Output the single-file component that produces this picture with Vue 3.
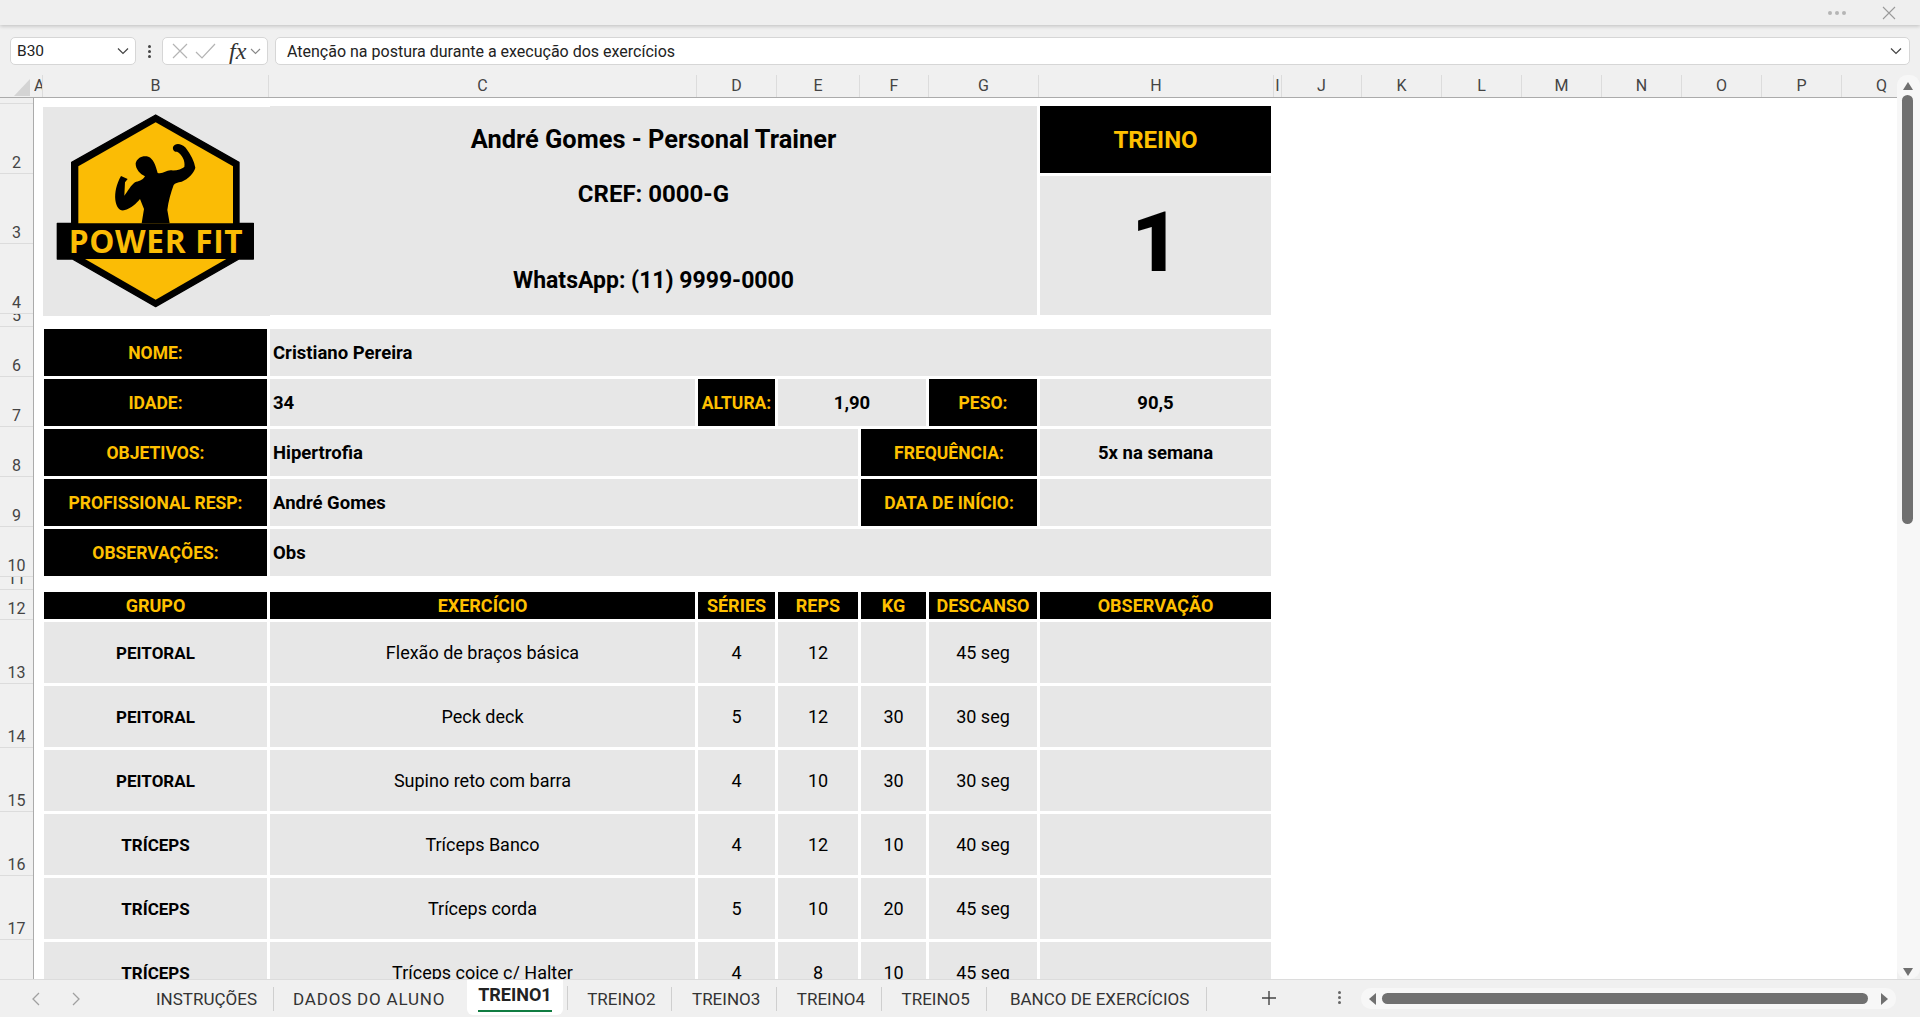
<template>
  <div class="app">
    <!-- barra de título -->
    <div class="title-bar">
      <span class="more-dots"><i></i><i></i><i></i></span>
      <svg class="close-x" width="14" height="14" viewBox="0 0 14 14"><path d="M1 1l12 12M13 1L1 13" stroke="#9a9a9a" stroke-width="1.1" fill="none" /></svg>
    </div>

    <!-- barra de fórmulas -->
    <div class="formula-bar">
      <div class="name-box">
        <span>B30</span>
        <svg width="12" height="8" viewBox="0 0 12 8"><path d="M1 1.500l5 5 5-5" stroke="#444" stroke-width="1.2" fill="none" /></svg>
      </div>
      <div class="kebab"><i></i><i></i><i></i></div>
      <div class="fx-box">
        <svg width="16" height="16" viewBox="0 0 16 16"><path d="M1 1l14 14M15 1L1 15" stroke="#b4b4b4" stroke-width="1.2" fill="none" /></svg>
        <svg width="21" height="16" viewBox="0 0 21 16"><path d="M1 9l6 6L20 1" stroke="#b4b4b4" stroke-width="1.2" fill="none" /></svg>
        <span class="fx">fx</span>
        <svg width="11" height="7" viewBox="0 0 11 7"><path d="M1 1l4.500 4.500L10 1" stroke="#888" stroke-width="1.1" fill="none" /></svg>
      </div>
      <div class="formula-input">
        <span>Atenção na postura durante a execução dos exercícios</span>
        <svg width="12" height="8" viewBox="0 0 12 8"><path d="M1 1.500l5 5 5-5" stroke="#444" stroke-width="1.2" fill="none" /></svg>
      </div>
    </div>

    <!-- cabeçalho de colunas -->
    <div class="col-headers">
      <div class="corner"><svg width="16" height="17" viewBox="0 0 16 17"><path d="M16 0v17H0z" fill="#d4d4d4" /></svg></div>
      <div
        class="col-head"
        v-for="col in columns"
        :key="col.name"
        :style="{ width: col.width + 'px' }"
      >{{ col.name }}</div>
    </div>

    <div class="sheet-area">
      <!-- números das linhas -->
      <div class="row-gutter">
        <div
          class="row-head"
          v-for="(row, i) in gutterRows"
          :key="i"
          :style="{ height: row.height + 'px' }"
        >{{ row.label }}</div>
      </div>

      <div class="sheet">
        <div class="grid head-grid">
          <div class="logo-cell">
            <svg width="230" height="210" viewBox="0 0 690 630">
              <path d="M350 30L600 172V355H643V462H600L350 605L100 462H55V355H98V172Z" fill="#000" stroke="#000" stroke-width="4" stroke-linejoin="round" />
              <path d="M350 52L582 184V355H118V184Z" fill="#fbbc05" />
              <path d="M138 462H562L350 584Z" fill="#fbbc05" />
              <path d="M402 126C408 114 425 114 440 128C455 148 466 168 469 188C465 204 448 222 428 230C416 232 408 234 404 240C396 262 388 290 385 315L392 355H308L315 312L303 282C292 295 278 310 255 316C240 318 232 305 229 285C227 262 232 238 246 213L266 222L258 232L256 272C266 260 276 240 288 232C298 228 310 228 318 214C304 208 289 192 290 175C294 158 312 150 328 155C342 160 350 180 356 204C372 208 380 196 395 196C412 198 428 192 436 186C440 168 428 146 414 140C408 142 400 136 402 126Z" fill="#000" />
              <text x="351" y="445" text-anchor="middle" class="logo-text">POWER FIT</text>
            </svg>
          </div>
          <div class="title-cell">
            <div class="title-line first">André Gomes - Personal Trainer</div>
            <div class="title-line second">CREF: 0000-G</div>
            <div class="title-line third">WhatsApp: (11) 9999-0000</div>
          </div>
          <div class="treino-label">TREINO</div>
          <div class="treino-num">1</div>
        </div>

        <div class="grid info-grid">
          <div class="label">NOME:</div>
          <div class="value span-all">Cristiano Pereira</div>

          <div class="label">IDADE:</div>
          <div class="value">34</div>
          <div class="label">ALTURA:</div>
          <div class="value center span-2">1,90</div>
          <div class="label">PESO:</div>
          <div class="value center">90,5</div>

          <div class="label">OBJETIVOS:</div>
          <div class="value span-3">Hipertrofia</div>
          <div class="label span-2">FREQUÊNCIA:</div>
          <div class="value center">5x na semana</div>

          <div class="label">PROFISSIONAL RESP:</div>
          <div class="value span-3">André Gomes</div>
          <div class="label span-2">DATA DE INÍCIO:</div>
          <div class="value center"></div>

          <div class="label">OBSERVAÇÕES:</div>
          <div class="value span-all">Obs</div>
        </div>

        <div class="grid train-head">
          <div class="label small" v-for="h in trainHeaders" :key="h">{{ h }}</div>
        </div>
        <div class="grid train-body">
          <template v-for="(t, i) in exercises" :key="i">
            <div class="data strong">{{ t.grupo }}</div>
            <div class="data">{{ t.nome }}</div>
            <div class="data">{{ t.series }}</div>
            <div class="data">{{ t.reps }}</div>
            <div class="data">{{ t.kg }}</div>
            <div class="data">{{ t.descanso }}</div>
            <div class="data"></div>
          </template>
        </div>
      </div>

      <!-- barra de rolagem vertical -->
      <div class="v-scroll">
        <svg width="12" height="8" viewBox="0 0 12 8"><path d="M6 0l5 8H1z" fill="#707070" /></svg>
        <div class="v-thumb"></div>
        <svg class="v-down" width="12" height="8" viewBox="0 0 12 8"><path d="M1 0h10L6 8z" fill="#707070" /></svg>
      </div>
    </div>

    <!-- abas -->
    <div class="tab-bar">
      <svg class="nav first-nav" width="10" height="16" viewBox="0 0 10 16"><path d="M8 2L2 8l6 6" stroke="#a0a0a0" stroke-width="1.3" fill="none" /></svg>
      <svg class="nav" width="10" height="16" viewBox="0 0 10 16"><path d="M2 2l6 6-6 6" stroke="#a0a0a0" stroke-width="1.3" fill="none" /></svg>
      <div class="tabs">
        <div
          class="tab"
          v-for="tab in tabs"
          :key="tab"
          :class="{
            active: tab === 'TREINO1',
            wide: tab === 'DADOS DO ALUNO',
            last: tab === 'BANCO DE EXERCÍCIOS',
          }"
        >{{ tab }}</div>
      </div>
      <svg class="plus" width="14" height="14" viewBox="0 0 14 14"><path d="M7 0v14M0 7h14" stroke="#444" stroke-width="1.4" /></svg>
      <div class="kebab tab-kebab"><i></i><i></i><i></i></div>
      <div class="h-scroll">
        <svg width="7" height="12" viewBox="0 0 7 12"><path d="M7 0v12L0 6z" fill="#707070" /></svg>
        <div class="h-thumb"></div>
        <svg width="7" height="12" viewBox="0 0 7 12"><path d="M0 0v12l7-6z" fill="#707070" /></svg>
      </div>
    </div>
  </div>
</template>

<script setup>
const columns = [
  { name: 'A', width: 9 },
  { name: 'B', width: 226 },
  { name: 'C', width: 428 },
  { name: 'D', width: 80 },
  { name: 'E', width: 83 },
  { name: 'F', width: 69 },
  { name: 'G', width: 110 },
  { name: 'H', width: 235 },
  { name: 'I', width: 8 },
  { name: 'J', width: 80 },
  { name: 'K', width: 80 },
  { name: 'L', width: 80 },
  { name: 'M', width: 80 },
  { name: 'N', width: 80 },
  { name: 'O', width: 80 },
  { name: 'P', width: 80 },
  { name: 'Q', width: 80 },
]

const gutterRows = [
  { label: '', height: 6 },
  { label: '2', height: 70 },
  { label: '3', height: 70 },
  { label: '4', height: 70 },
  { label: '5', height: 13 },
  { label: '6', height: 50 },
  { label: '7', height: 50 },
  { label: '8', height: 50 },
  { label: '9', height: 50 },
  { label: '10', height: 50 },
  { label: '11', height: 13 },
  { label: '12', height: 30 },
  { label: '13', height: 64 },
  { label: '14', height: 64 },
  { label: '15', height: 64 },
  { label: '16', height: 64 },
  { label: '17', height: 64 },
  { label: '', height: 64 },
]

const trainHeaders = ['GRUPO', 'EXERCÍCIO', 'SÉRIES', 'REPS', 'KG', 'DESCANSO', 'OBSERVAÇÃO']

const exercises = [
  { grupo: 'PEITORAL', nome: 'Flexão de braços básica', series: 4, reps: 12, kg: '', descanso: '45 seg' },
  { grupo: 'PEITORAL', nome: 'Peck deck', series: 5, reps: 12, kg: 30, descanso: '30 seg' },
  { grupo: 'PEITORAL', nome: 'Supino reto com barra', series: 4, reps: 10, kg: 30, descanso: '30 seg' },
  { grupo: 'TRÍCEPS', nome: 'Tríceps Banco', series: 4, reps: 12, kg: 10, descanso: '40 seg' },
  { grupo: 'TRÍCEPS', nome: 'Tríceps corda', series: 5, reps: 10, kg: 20, descanso: '45 seg' },
  { grupo: 'TRÍCEPS', nome: 'Tríceps coice c/ Halter', series: 4, reps: 8, kg: 10, descanso: '45 seg' },
]

const tabs = ['INSTRUÇÕES', 'DADOS DO ALUNO', 'TREINO1', 'TREINO2', 'TREINO3', 'TREINO4', 'TREINO5', 'BANCO DE EXERCÍCIOS']
</script>

<style>
html, body {
  margin: 0;
  overflow: hidden;
}
</style>

<style scoped>
.app {
  width: 1920px;
  height: 1017px;
  display: flex;
  flex-direction: column;
  background: #f0f0f0;
  font-family: "Roboto", "Liberation Sans", sans-serif;
  color: #000;
  overflow: hidden;
}

.title-bar {
  height: 25px;
  flex-shrink: 0;
  display: flex;
  align-items: center;
  justify-content: flex-end;
  padding-right: 24px;
  gap: 36px;
  box-shadow: 0 1px 4px rgba(0,0,0,0.22);
  background: #efefef;
  box-sizing: border-box;
}

.more-dots {
  display: flex;
  gap: 3px;
}

.more-dots i {
  width: 4px;
  height: 4px;
  border-radius: 50%;
  background: #b5b5b5;
}

.formula-bar {
  display: flex;
  align-items: stretch;
  height: 28px;
  margin: 12px 10px 10px 10px;
  flex-shrink: 0;
}

.name-box, .fx-box, .formula-input {
  background: #fff;
  border: 1px solid #d6d6d6;
  border-radius: 5px;
  box-sizing: border-box;
  display: flex;
  align-items: center;
}

.name-box {
  width: 126px;
  padding: 0 6px;
  justify-content: space-between;
  font-size: 15.5px;
  color: #222;
}

.kebab {
  width: 26px;
  display: flex;
  flex-direction: column;
  align-items: center;
  justify-content: center;
  gap: 2px;
}

.kebab i {
  width: 3px;
  height: 3px;
  background: #444;
  border-radius: 50%;
}

.fx-box {
  width: 106px;
  padding: 0 4px 0 9px;
  gap: 7px;
}

.fx {
  font-family: "Liberation Serif", serif;
  font-style: italic;
  font-size: 24px;
  color: #333;
  margin-left: 6px;
  margin-right: -3px;
  line-height: 1;
}

.formula-input {
  flex: 1;
  margin-left: 7px;
  padding: 0 7px 0 11px;
  justify-content: space-between;
  font-size: 16px;
  color: #222;
}

.col-headers {
  display: flex;
  height: 23px;
  flex-shrink: 0;
  border-bottom: 1px solid #ababab;
  width: 1897px;
  overflow: hidden;
  box-sizing: border-box;
}

.corner {
  width: 34px;
  flex-shrink: 0;
  display: flex;
  justify-content: flex-end;
  padding: 4px 4px 0 0;
  box-sizing: border-box;
}

.col-head {
  flex-shrink: 0;
  text-align: center;
  font-size: 16px;
  line-height: 22px;
  color: #444;
  border-right: 1px solid #dcdcdc;
  box-sizing: border-box;
  overflow: hidden;
}

.sheet-area {
  flex: 1;
  display: flex;
  min-height: 0;
}

.row-gutter {
  width: 34px;
  flex-shrink: 0;
  border-right: 1px solid #ababab;
  box-sizing: border-box;
  overflow: hidden;
}

.row-head {
  display: flex;
  align-items: flex-end;
  justify-content: center;
  box-sizing: border-box;
  border-bottom: 1px solid #dcdcdc;
  font-size: 16px;
  line-height: 21px;
  color: #444;
  overflow: hidden;
}

.sheet {
  width: 1863px;
  background: #fff;
  padding: 8px 0 0 10px;
  box-sizing: border-box;
  overflow: hidden;
}

.grid {
  display: grid;
  grid-template-columns: 223px 425px 77px 80px 65px 108px 231px;
  gap: 3px;
}

.head-grid {
  grid-template-rows: 67px 139px;
}

.logo-cell {
  grid-row: 1 / span 2;
  margin: 1px -3px -1px -1px;
  background: #e7e7e7;
  display: flex;
  align-items: center;
  justify-content: center;
  overflow: hidden;
}

.logo-cell svg {
  flex-shrink: 0;
  margin: 0 5px 3px 0;
}

.logo-text {
  font-family: "Open Sans", sans-serif;
  font-weight: 700;
  font-size: 95px;
  letter-spacing: 2px;
  fill: #fbbc05;
}

.title-cell {
  grid-column: 2 / span 5;
  grid-row: 1 / span 2;
  background: #e7e7e7;
  display: flex;
  flex-direction: column;
  align-items: center;
  font-weight: 700;
  font-size: 24px;
}

.title-line {
  line-height: 30px;
}

.title-line.first {
  margin-top: 18px;
  font-size: 25.400px;
}

.title-line.second {
  margin-top: 25px;
}

.title-line.third {
  margin-top: 57px;
  font-size: 23px;
}

.treino-label {
  background: #000;
  color: #ffc000;
  font-weight: 700;
  font-size: 24px;
  padding-top: 1px;
  display: flex;
  align-items: center;
  justify-content: center;
}

.treino-num {
  background: #e7e7e7;
  font-weight: 900;
  font-size: 84px;
  line-height: 1;
  padding-bottom: 6px;
  display: flex;
  align-items: center;
  justify-content: center;
}

.info-grid {
  grid-auto-rows: 47px;
  margin-top: 14px;
}

.label {
  background: #000;
  color: #ffc000;
  font-weight: 700;
  font-size: 17.500px;
  display: flex;
  align-items: center;
  justify-content: center;
  white-space: nowrap;
}

.label.small {
  font-size: 18px;
}

.value {
  background: #e7e7e7;
  font-weight: 700;
  font-size: 18.500px;
  display: flex;
  align-items: center;
  padding-left: 3px;
}

.value.center {
  justify-content: center;
  padding-left: 0;
}

.span-all {
  grid-column: 2 / span 6;
}

.span-2 {
  grid-column: span 2;
}

.span-3 {
  grid-column: span 3;
}

.train-head {
  margin-top: 16px;
  grid-auto-rows: 27px;
}

.train-body {
  margin-top: 3px;
  grid-auto-rows: 61px;
}

.data {
  background: #e7e7e7;
  font-size: 18px;
  display: flex;
  align-items: center;
  justify-content: center;
}

.data.strong {
  font-weight: 700;
  font-size: 17px;
}

.v-scroll {
  width: 23px;
  flex-shrink: 0;
  display: flex;
  flex-direction: column;
  align-items: center;
  padding: 0 2px 3px 0;
  box-sizing: border-box;
  background: #f7f7f7;
  margin-top: -23px;
  border-radius: 10px;
  position: relative;
}

.v-scroll > svg:first-child {
  margin-top: 7px;
}

.v-thumb {
  width: 11px;
  height: 429px;
  margin-top: 5px;
  background: #707070;
  border-radius: 6px;
}

.v-down {
  margin-top: auto;
}

.tab-bar {
  height: 38px;
  flex-shrink: 0;
  display: flex;
  align-items: center;
  position: relative;
  border-top: 1px solid #dcdcdc;
  box-sizing: border-box;
}

.nav.first-nav {
  margin-left: 31px;
  margin-right: 30px;
}

.tabs {
  display: flex;
  align-items: center;
  margin-left: 55px;
}

.tab {
  padding: 0 16px 0 19.500px;
  height: 24px;
  line-height: 24px;
  font-size: 17px;
  color: #333;
  border-right: 1px solid #cfcfcf;
  white-space: nowrap;
}

.tab:first-child {
  padding-left: 20px;
}

.tab.wide {
  letter-spacing: 0.8px;
  padding-left: 19px;
  padding-right: 22px;
  border-right: none;
}

.tab.last {
  padding-left: 23px;
  padding-right: 17px;
}

.tab.active {
  background: #fff;
  height: 35px;
  line-height: 30px;
  box-sizing: border-box;
  font-size: 18px;
  font-weight: 700;
  color: #222;
  padding: 0 11px;
  margin: -3px 5px 0 0;
  border-right: none;
  border-radius: 0 0 6px 6px;
  position: relative;
}

.tab.active::before {
  content: "";
  position: absolute;
  right: -5px;
  top: 6px;
  width: 1px;
  height: 24px;
  background: #cfcfcf;
}

.tab.active::after {
  content: "";
  position: absolute;
  left: 11px;
  right: 11px;
  bottom: 3px;
  height: 2px;
  background: #107c41;
}

.plus {
  position: absolute;
  left: 1262px;
  top: 11px;
}

.tab-kebab {
  position: absolute;
  left: 1326px;
  top: 11px;
}

.tab-kebab i {
  background: #666;
}

.h-scroll {
  position: absolute;
  left: 1361px;
  top: 8px;
  width: 535px;
  height: 21px;
  background: #f7f7f7;
  border-radius: 10px;
  display: flex;
  align-items: center;
  gap: 6px;
  padding: 0 8px;
  box-sizing: border-box;
}

.h-thumb {
  flex: 1;
  height: 11px;
  margin-right: 7px;
  background: #707070;
  border-radius: 6px;
}
</style>
